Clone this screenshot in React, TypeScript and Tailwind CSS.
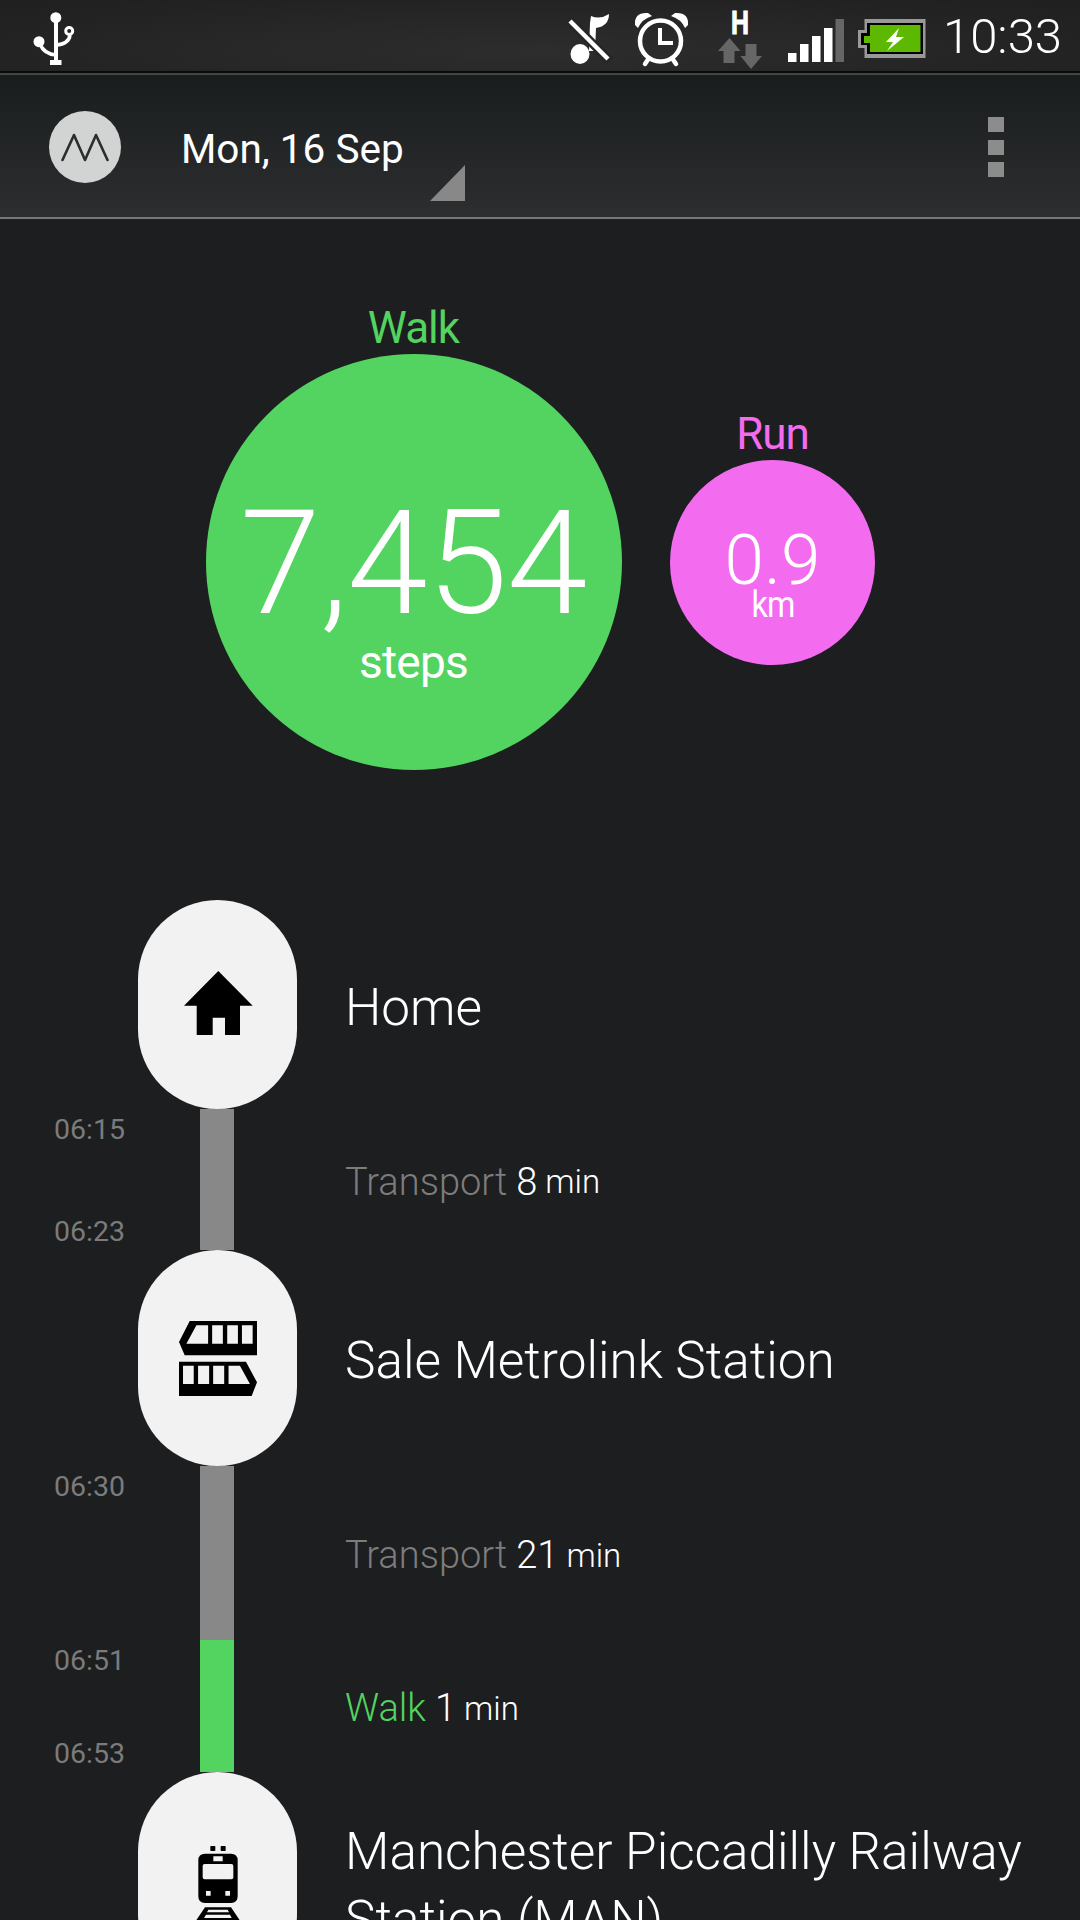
const body = "#1d1e20";

function StatusIcons() {
  return (
    <div className="ml-auto flex items-center">
      {/* muted note */}
      <svg viewBox="560 0 70 72" className="h-[72px] w-[70px]">
        <ellipse cx="580" cy="53" rx="9.5" ry="10" fill="#fff" />
        <path d="M589 50 L590 22 L591 15 Q600 19 609 13 Q609 25 596 27 L595 50 Z" fill="#fff" />
        <path d="M568 18 L610 60" stroke="#262626" strokeWidth="9" />
        <path d="M570 20 L608 58" stroke="#fff" strokeWidth="4.5" />
      </svg>
      {/* alarm */}
      <svg viewBox="630 0 65 72" className="h-[72px] w-[65px]">
        <circle cx="660.5" cy="40" r="20.5" fill="none" stroke="#fff" strokeWidth="4.5" />
        <path d="M660 27 V42 H673" fill="none" stroke="#fff" strokeWidth="4" />
        <path d="M635 24 Q634 11 648 12 L652 15 Q642 18 638 27 Z" fill="#fff" />
        <path d="M688 24 Q689 11 675 12 L671 15 Q681 18 685 27 Z" fill="#fff" />
        <path d="M645 63 L649 57 M676 63 L672 57" stroke="#fff" strokeWidth="4.5" strokeLinecap="round" />
      </svg>
      {/* HSDPA data */}
      <svg viewBox="695 0 90 72" className="h-[72px] w-[90px]">
        <text x="731" y="33" textLength="18" lengthAdjust="spacingAndGlyphs" fontFamily="Liberation Sans, sans-serif" fontWeight="700" fontSize="33" fill="#fff" stroke="#fff" strokeWidth="1">H</text>
        <path d="M718 50 L729.5 37 L740.5 50 H734.5 V62 H723.5 V50 Z" fill="#666" />
        <path d="M740.5 55 L751 68 L762 55 H756.5 V43 H745.5 V55 Z" fill="#666" />
      </svg>
      {/* signal */}
      <svg viewBox="785 0 65 72" className="h-[72px] w-[65px]">
        <rect x="788" y="52" width="8.5" height="9" fill="#fff" />
        <rect x="800" y="43" width="8.5" height="18" fill="#fff" />
        <rect x="812" y="35" width="8.5" height="26" fill="#fff" />
        <rect x="824" y="27" width="8.5" height="34" fill="#fff" />
        <rect x="835.5" y="18" width="8.5" height="43" fill="#666" />
      </svg>
      {/* battery charging */}
      <svg viewBox="850 0 90 72" className="h-[72px] w-[90px]">
        <rect x="858" y="29" width="8" height="18" fill="#999" />
        <rect x="864.5" y="18" width="61" height="39" fill="#999" />
        <rect x="867" y="22" width="56" height="31" fill="#000" />
        <rect x="861" y="32" width="8" height="12" fill="#000" />
        <rect x="870" y="24" width="50.5" height="27" fill="#5cb800" />
        <rect x="864" y="35" width="7" height="7" fill="#5cb800" />
        <path d="M899 27 L886 41 H893 L887 50 L904 36 H896 Z" fill="#fff" />
      </svg>
      <span className="pl-[3px] pr-[18px] font-['Roboto',sans-serif] text-[49px] font-light leading-[72px] text-white">10:33</span>
    </div>
  );
}

function StatusBar() {
  return (
    <div className="flex h-[75px] items-stretch border-b-2 border-[#444] bg-[radial-gradient(ellipse_at_50%_70%,#2d2d2d,#1f1f1f)] shadow-[inset_0_-2px_0_#0a0a0a]">
      <svg viewBox="0 0 96 72" className="h-[72px] w-[96px]">
        <circle cx="55.8" cy="17.7" r="5.5" fill="#fff" />
        <circle cx="39" cy="41.7" r="5.5" fill="#fff" />
        <circle cx="69.2" cy="31" r="3.5" fill="none" stroke="#fff" strokeWidth="3" />
        <rect x="54" y="18" width="4" height="44" fill="#fff" />
        <rect x="50" y="60" width="11.5" height="5" fill="#fff" />
        <path d="M40 44 Q44 54 56 55 M70 35 Q69 44 56 45" fill="none" stroke="#fff" strokeWidth="3.5" />
      </svg>
      <StatusIcons />
    </div>
  );
}

function AppBar() {
  return (
    <div className="flex h-[144px] items-center border-b-2 border-[#777] bg-gradient-to-b from-[#1a1d1e] to-[#2c2e30] pl-[49px] pr-[76px]">
      <div className="mt-[2px] flex h-[72px] w-[72px] items-center justify-center rounded-full bg-[#d2d3d3]">
        <svg viewBox="0 0 48 29" className="w-[48px]">
          <path d="M1.5 27 L13 2 L24 27 L35 2 L46.5 27" fill="none" stroke="#2a2c2e" strokeWidth="2.6" strokeLinecap="round" strokeLinejoin="round" />
        </svg>
      </div>
      <span className="ml-[60px] mt-[6px] font-['Roboto',sans-serif] text-[40.5px] leading-none text-white">Mon, 16 Sep</span>
      <svg viewBox="0 0 35 36" className="ml-[26px] mt-[74px] h-[36px] w-[35px]">
        <path d="M0 36 L35 0 V36 Z" fill="#888" />
      </svg>
      <div className="ml-auto mt-[2px] flex flex-col gap-[7.5px]">
        <div className="h-[15px] w-[16px] bg-[#8c8c8c]" />
        <div className="h-[15px] w-[16px] bg-[#8c8c8c]" />
        <div className="h-[15px] w-[16px] bg-[#8c8c8c]" />
      </div>
    </div>
  );
}

function Summary() {
  return (
    <div className="flex h-[681px] items-start pl-[205.5px] pt-[83px] font-['Roboto',sans-serif]">
      <div className="flex w-[416px] flex-col items-center">
        <span className="text-[44px] font-normal leading-[52px] tracking-[-1px] text-[#53d35f]">Walk</span>
        <div className="flex h-[416px] w-[416px] flex-col items-center justify-center rounded-full bg-[#53d35f] pt-[51px] text-white">
          <span className="text-[145px] font-light leading-[150px] tracking-[-0.5px]">7,454</span>
          <span className="text-[46px] font-normal leading-[49px] tracking-[-0.8px]">steps</span>
        </div>
      </div>
      <div className="ml-[48.5px] mt-[106px] flex w-[205px] flex-col items-center">
        <span className="text-[44px] font-normal leading-[52px] tracking-[-1px] text-[#f36cf0]">Run</span>
        <div className="flex h-[205px] w-[205px] flex-col items-center justify-center rounded-full bg-[#f36cf0] pt-[26px] text-white">
          <span className="text-[71px] font-light leading-[60px]">0.9</span>
          <span className="scale-x-90 text-[36px] font-normal leading-[31px] tracking-[-1px]">km</span>
        </div>
      </div>
    </div>
  );
}

function Stop({ height, name, children }: { height: string; name: string; children: React.ReactNode }) {
  return (
    <div className={`flex ${height} items-start`}>
      <div className="ml-[138px] flex h-full w-[159px] shrink-0 items-center justify-center rounded-[80px] bg-[#f2f2f2]">
        {children}
      </div>
      <div className="ml-[48px] self-center pr-[40px] pt-[6px] text-[51.3px] font-light leading-[68px] text-white">{name}</div>
    </div>
  );
}

function Leg({ height, bar, top, bottom, kind, kindColor, mins }: { height: string; bar: string; top: string; bottom?: string; kind: string; kindColor: string; mins: string }) {
  return (
    <div className={`flex ${height} items-stretch`}>
      <div className="ml-[54px] flex w-[146px] flex-col justify-between pb-[5px] pt-[8px] text-[28.5px] leading-[26px] text-[#7b7b7b]">
        <span>{top}</span>
        {bottom ? <span>{bottom}</span> : null}
      </div>
      <div className={`w-[34px] ${bar}`} />
      <div className="ml-[111px] flex items-center pt-[4px] text-[38px] font-light leading-none">
        <span className={kindColor}>{kind}</span>
        <span className="ml-[9px] text-white">{mins}</span>
        <span className="ml-[8px] text-[33px] text-white">min</span>
      </div>
    </div>
  );
}

export default function App() {
  return (
    <div className="h-[1920px] w-[1080px] overflow-hidden font-['Roboto',sans-serif]" style={{ backgroundColor: body }}>
      <StatusBar />
      <AppBar />
      <Summary />
      <Stop height="h-[209px]" name="Home">
        <svg viewBox="184 971 69 64" className="ml-[1px] mt-[-3px] h-[64px] w-[69px]">
          <path fillRule="evenodd" d="M218.3 971 L252.7 1005.7 H240 V1035 H225 V1017.7 H212.7 V1035 H196.7 V1005.7 H184 Z" fill="#000" />
        </svg>
      </Stop>
      <Leg height="h-[141px]" bar="bg-[#888]" top="06:15" bottom="06:23" kind="Transport" kindColor="text-[#7c7c7c]" mins="8" />
      <Stop height="h-[216px]" name="Sale Metrolink Station">
        <svg viewBox="148 212 233 224" className="h-[75px] w-[78px]">
          <path fillRule="evenodd" fill="#000" d="M180 212 H381 V314 H165 L148 275 Z M200 225 H235 V280 H170 Z M247 225 H279 V280 H247 Z M292 225 H324 V280 H292 Z M336 225 H368 V280 H336 Z" />
          <path fillRule="evenodd" fill="#000" d="M148 334 H348 L381 395 L365 436 H148 Z M160 346 H192 V400 H160 Z M205 346 H238 V400 H205 Z M250 346 H283 V400 H250 Z M296 346 H330 L360 400 H296 Z" />
        </svg>
      </Stop>
      <Leg height="h-[174px]" bar="bg-[#888]" top="06:30" kind="Transport" kindColor="text-[#7c7c7c]" mins="21" />
      <Leg height="h-[132px]" bar="bg-[#53d35f]" top="06:51" bottom="06:53" kind="Walk" kindColor="text-[#53d35f]" mins="1" />
      <Stop height="h-[221px]" name="Manchester Piccadilly Railway Station (MAN)">
        <svg viewBox="198 229 132 234" className="mt-[5px] h-[78px] w-[44px]">
          <rect x="241" y="229" width="15" height="15" rx="2" />
          <rect x="272" y="229" width="15" height="15" rx="2" />
          <path fillRule="evenodd" d="M225 252 H303 Q323 252 323 272 V380 Q323 400 303 400 H225 Q205 400 205 380 V272 Q205 252 225 252 Z M250 260 V275 H278 V260 Z M224 283 Q218 283 218 289 V323 Q218 329 224 329 H304 Q310 329 310 323 V289 Q310 283 304 283 Z M228 364 V378 H242 V364 Z M286 364 V378 H300 V364 Z" />
          <path fillRule="evenodd" d="M225 413 H303 L345 475 H183 Z M235 420 L231 428 H297 L293 420 Z M228 435 L222 445 H305 L300 435 Z" />
        </svg>
      </Stop>
    </div>
  );
}
